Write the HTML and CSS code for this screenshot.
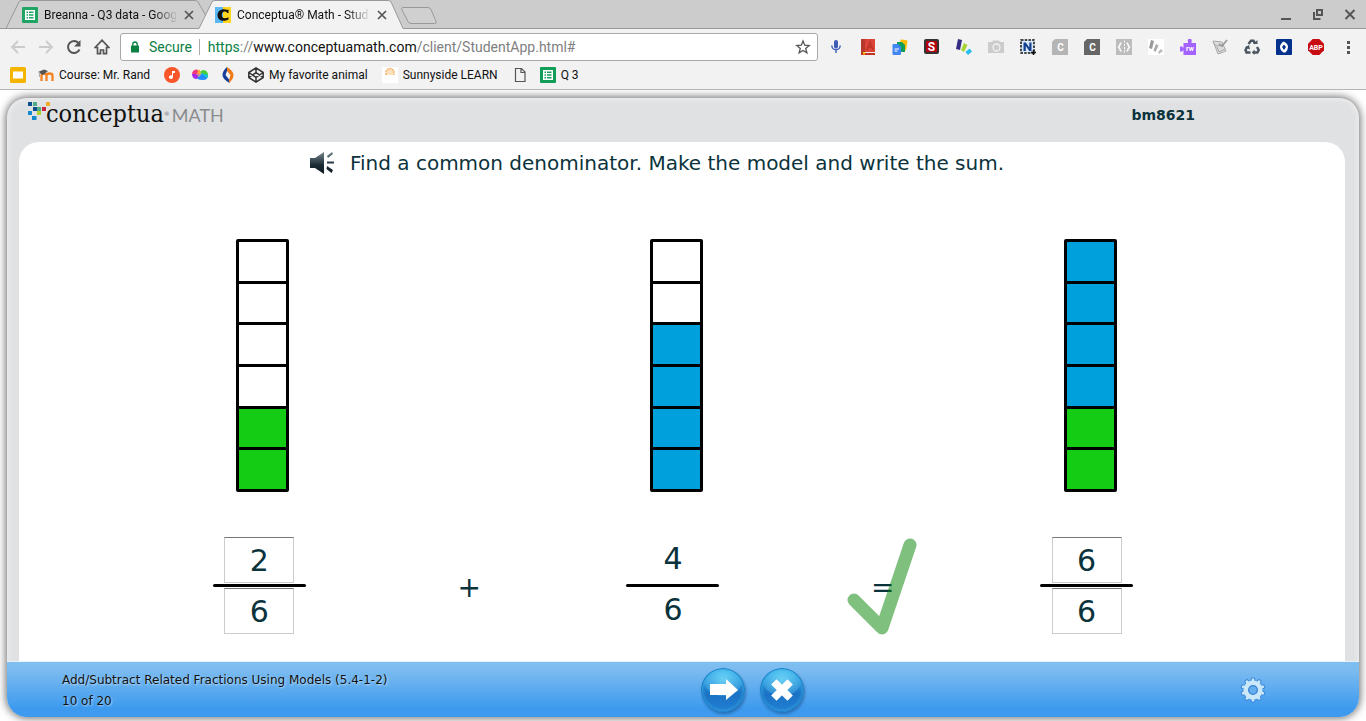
FILE: index.html
```html
<!DOCTYPE html>
<html lang="en">
<head>
<meta charset="utf-8">
<title>Conceptua® Math - Student</title>
<link rel="stylesheet" href="styles.css">
</head>
<body>
<header class="browser">
  <div class="tabstrip">
    <div class="tab">
      <svg class="tab-shape" viewBox="0 0 209 29" preserveAspectRatio="none"><path d="M0 28.5 L13 2 Q14 .5 16 .5 H190 Q192 .5 193 2 L208 28.5Z" fill="#d0d0d0" stroke="#999"/></svg>
      <svg class="icon" viewBox="0 0 16 16"><rect width="16" height="16" rx="1" fill="#1fa463"/><path d="M3 3h10v10H3zM4.500 4.500v1.500h1.500v-1.500zM7 4.500v1.500h4.500v-1.500zM4.500 7.200v1.500h1.500v-1.500zM7 7.200v1.500h4.500v-1.500zM4.500 10v1.500h1.500v-1.500zM7 10v1.500h4.500v-1.500z" fill="#fff" fill-rule="evenodd"/></svg>
      <span class="tab-title">Breanna - Q3 data - Goog</span>
      <button class="plain tab-close" aria-label="Close tab"><svg viewBox="0 0 10 10"><path d="M1 1l8 8M9 1l-8 8" stroke="#555" stroke-width="1.700"/></svg></button>
    </div>
    <div class="tab tab-active">
      <svg class="tab-shape" viewBox="0 0 209 29" preserveAspectRatio="none"><path d="M0 28.5 L13 2 Q14 .5 16 .5 H190 Q192 .5 193 2 L205 28.5 V29 H0Z" fill="#f2f2f2"/><path d="M0 28.5 L13 2 Q14 .5 16 .5 H190 Q192 .5 193 2 L205 28.5" fill="none" stroke="#999"/></svg>
      <svg class="icon" viewBox="0 0 16 16"><rect width="8" height="16" fill="#5bb8f5"/><rect x="8" width="8" height="16" fill="#ffd51f"/><path d="M13.500 6V2.300l-1 .7C8 .8 2.500 3 2.500 8s5 7.500 11 4.500v-2.300C9.500 12.500 6.800 11 6.800 8s3-5 5.500-2z" fill="#111"/></svg>
      <span class="tab-title">Conceptua® Math - Stud</span>
      <button class="plain tab-close" aria-label="Close tab"><svg viewBox="0 0 10 10"><path d="M1 1l8 8M9 1l-8 8" stroke="#555" stroke-width="1.700"/></svg></button>
    </div>
    <button class="plain new-tab" aria-label="New tab"><svg viewBox="0 0 36 18"><path d="M2 .5h25q2 0 3 2l5 12q1 2-1.500 2H10q-2 0-3-2L1 3Q0 .5 2 .5z" fill="#d0d0d0" stroke="#999"/></svg></button>
    <div class="window-controls">
      <button class="plain icon-button" aria-label="Minimize"><svg viewBox="0 0 16 16"><path d="M3 11h10v2H3z" fill="#555"/></svg></button>
      <button class="plain icon-button" aria-label="Restore"><svg viewBox="0 0 16 16"><path d="M7 3h5v5H7z" fill="none" stroke="#555" stroke-width="2"/><path d="M4 5v7h6.500" fill="none" stroke="#555" stroke-width="2"/></svg></button>
      <button class="plain icon-button" aria-label="Close"><svg viewBox="0 0 16 16"><path d="M3.500 3l9 9M12.500 3l-9 9" stroke="#555" stroke-width="2"/></svg></button>
    </div>
  </div>

  <div class="toolbar">
    <nav class="nav-buttons">
      <button class="plain icon-button" aria-label="Back"><svg viewBox="0 0 16 16"><path d="M15 8H2M8 2L2 8l6 6" fill="none" stroke="#cbcbcb" stroke-width="1.800"/></svg></button>
      <button class="plain icon-button" aria-label="Forward"><svg viewBox="0 0 16 16"><path d="M1 8h13M8 2l6 6-6 6" fill="none" stroke="#cbcbcb" stroke-width="1.800"/></svg></button>
      <button class="plain icon-button" aria-label="Reload"><svg viewBox="0 0 16 16"><path d="M13.500 10.500A6 6 0 1 1 12.500 4" fill="none" stroke="#555" stroke-width="2"/><path d="M14.500 1v6.500H8z" fill="#555"/></svg></button>
      <button class="plain icon-button" aria-label="Home"><svg viewBox="0 0 16 16"><path d="M3.500 14.700V8.500H1.200L8 1.200 14.800 8.500h-2.300v6.200h-3V11h-3v3.700z" fill="none" stroke="#555" stroke-width="1.700"/></svg></button>
    </nav>
    <div class="omnibox">
      <svg class="lock" viewBox="0 0 8 12"><path d="M1.800 5V3.200a2.200 2.200 0 0 1 4.400 0V5" fill="none" stroke="#0b8043" stroke-width="1.300"/><rect y="4.500" width="8" height="7" rx=".6" fill="#0b8043"/></svg>
      <span class="secure">Secure</span>
      <span class="url" role="textbox" aria-label="Address"><span class="scheme">https</span>://<span class="host">www.conceptuamath.com</span>/client/StudentApp.html#</span>
      <button class="plain icon-button" aria-label="Bookmark this page"><svg viewBox="0 0 16 16"><path d="M8 2l1.700 4.200 4.500.3-3.500 2.900 1.200 4.400L8 11.400l-3.900 2.400 1.200-4.400-3.500-2.900 4.500-.3z" fill="none" stroke="#555" stroke-width="1.300"/></svg></button>
    </div>
    <div class="extensions">
      <button class="plain icon-button" aria-label="Voice"><svg viewBox="0 0 16 16"><rect x="6" y="1" width="4" height="8.500" rx="2" fill="#3f5bb5"/><path d="M3.800 6.500a4.200 4.200 0 0 0 8.400 0M8 11v3" fill="none" stroke="#3f5bb5" stroke-width="1.400"/></svg></button>
      <button class="plain icon-button" aria-label="Dictionary"><svg viewBox="0 0 16 16"><path d="M1 0h14v13H1z" fill="#db4437"/><path d="M1 0h4v16H1z" fill="#b5392d"/><path d="M3 13h12v1.200H3z" fill="#eee"/><path d="M1 14h14v2H1z" fill="#c23321"/><path d="M3 13h2v3l-1-1-1 1z" fill="#fbbc05"/><path d="M7 11l3-8 3 8M8 8h4" fill="none" stroke="#bb3428" stroke-width="1.400"/></svg></button>
      <button class="plain icon-button" aria-label="Documents"><svg viewBox="0 0 16 16"><rect x="8" y="1" width="7" height="10" rx="1" fill="#fbbc05" transform="rotate(8 12 5)"/><path d="M5 3h5l3 3v7H5z" fill="#0f9d58"/><path d="M1.500 5H6l3 3v7q0 1-1 1H1.500q-1 0-1-1V6q0-1 1-1z" fill="#4285f4"/><path d="M2.500 10h4.500M2.500 12h3" stroke="#fff"/></svg></button>
      <button class="plain icon-button" aria-label="S extension"><svg viewBox="0 0 16 16"><rect width="15" height="15" rx="2" fill="#333"/><path d="M2 2h11v11H2z" fill="#b3000c"/><text x="7.500" y="12" class="glyph glyph-l">S</text></svg></button>
      <button class="plain icon-button" aria-label="Highlighter"><svg viewBox="0 0 16 16"><path d="M2 0l4 1-2 10-4-1z" fill="#352b82"/><path d="M8 4l3.500 2-3.500 7-3-2z" fill="#a6d433"/><path d="M13.500 9.500l2.500 3-4 3.500-2.500-3z" fill="#27bdf1"/></svg></button>
      <button class="plain icon-button" aria-label="Camera"><svg viewBox="0 0 16 16"><path d="M1 3h3l1-1.500h6L12 3h4v11H0V4q0-1 1-1z" fill="#ccc"/><circle cx="8.500" cy="8.500" r="3.500" fill="none" stroke="#f2f2f2" stroke-width="1.300"/></svg></button>
      <button class="plain icon-button" aria-label="Nimbus"><svg viewBox="0 0 16 16"><path d="M1 1h13v13H1z" fill="#d9e9f8" stroke="#111" stroke-width="1.500" stroke-dasharray="2.500 1.200"/><path d="M3.500 12V3.500h2.300l3.500 5V3.500h2.200V12H9.300L5.800 7v5z" fill="#123f91"/><path d="M13.500 11v5M11 13.500h5" stroke="#111" stroke-width="1.500"/></svg></button>
      <button class="plain icon-button" aria-label="C extension"><svg viewBox="0 0 16 16"><path d="M3 0h13v16H0V3z" fill="#b5b5b5"/><text x="8.500" y="11.500" class="glyph">C</text></svg></button>
      <button class="plain icon-button" aria-label="C tool"><svg viewBox="0 0 16 16"><path d="M3 0h13v16H0V3z" fill="#666"/><text x="8.500" y="11.500" class="glyph">C</text></svg></button>
      <button class="plain icon-button" aria-label="Code view"><svg viewBox="0 0 16 16"><path d="M0 0h16v16H0z" fill="#bdbdbd"/><path d="M5.500 4Q4 4 4 6L2.500 8 4 10q0 2 1.500 2M10.500 4Q12 4 12 6l1.500 2L12 10q0 2-1.500 2" fill="none" stroke="#fff" stroke-width="1.400"/><path d="M8.500 1.500v13" stroke="#fff" stroke-dasharray="2 1.300"/></svg></button>
      <button class="plain icon-button" aria-label="Marker"><svg viewBox="0 0 16 16"><path d="M0 0h16v16H0z" fill="#fff"/><path d="M3 1l3 1-2 8-3-1z" fill="#999"/><path d="M8 5l2.500 1.500-3 6.500-2-1.500z" fill="#aaa"/><path d="M13 10l2 2-4 3-1-2z" fill="#bbb"/></svg></button>
      <button class="plain icon-button" aria-label="Read and write"><svg viewBox="0 0 16 16"><path d="M3.500 4H8V2.500A2 2 0 1 1 11.500 2.500V4H16v12H3.500v-4.500H2.500v1H0v-5h2.500v1h1z" fill="#a463ff"/><text x="10" y="12" class="glyph glyph-s">rw</text></svg></button>
      <button class="plain icon-button" aria-label="Notes"><svg viewBox="0 0 16 16"><path d="M1 2l9 1 4 9-8 3z" fill="#ddd" stroke="#aaa"/><path d="M1 3l3 4 8-1M5 8l2 5 6-3" fill="none" stroke="#aaa"/><path d="M15 1l-5 6-3-2" fill="none" stroke="#999" stroke-width="1.700"/></svg></button>
      <button class="plain icon-button" aria-label="Recycle"><svg viewBox="0 0 16 16"><path d="M4.500 5L7 1.800h2.500l1.600 2.700M13 8l1.700 3-1.300 2.500H9M6.500 13.500H2.500L1.500 11l2-3.500" fill="none" stroke="#4b5661" stroke-width="2.500"/><path d="M9 5h4.500V1zM10.500 10.500v5.500L7.800 13.500zM1 8.500L5 6l1 4.500z" fill="#4b5661"/></svg></button>
      <button class="plain icon-button" aria-label="Clever"><svg viewBox="0 0 16 16"><rect width="16" height="16" rx="1" fill="#03318c"/><path d="M7.500 2.500Q4 5 4 8t3.500 5.500L9.500 13.500Q12 11 12 8T8.500 3zM8 5.500l2 2.500-2 3-2-3z" fill="#fff" fill-rule="evenodd"/></svg></button>
      <button class="plain icon-button" aria-label="Ad blocker"><svg viewBox="0 0 16 16"><path d="M4.700 0h6.600L16 4.700v6.600L11.300 16H4.700L0 11.300V4.700z" fill="#c70d11"/><text x="8" y="11" class="glyph glyph-s">ABP</text></svg></button>
      <button class="plain icon-button" aria-label="Menu"><svg viewBox="0 0 16 16"><path d="M7 2h3v3H7zM7 7h3v3H7zM7 12h3v3H7z" fill="#555"/></svg></button>
    </div>
  </div>

  <nav class="bookmarks">
    <a class="bookmark" href="#" aria-label="Slides"><svg class="icon" viewBox="0 0 16 16"><rect width="16" height="16" rx="1.500" fill="#f5b400"/><path d="M3 4.500h10v7H3z" fill="#fff"/></svg></a>
    <a class="bookmark" href="#"><svg class="icon" viewBox="0 0 16 16"><path d="M3.500 14V8.500Q3.500 6.500 6 6.500t2.500 2V14V8.500Q8.500 6.500 11.500 6.500T14.500 8.500V14" fill="none" stroke="#f58220" stroke-width="2.300"/><path d="M0 5l6-2.500L10 4 5 8z" fill="#555"/><path d="M1.500 5v5" stroke="#aaa"/></svg><span class="bookmark-name">Course: Mr. Rand</span></a>
    <a class="bookmark" href="#" aria-label="Music"><svg class="icon" viewBox="0 0 16 16"><circle cx="8" cy="8" r="8" fill="#f9562a"/><path d="M8 4h3v2H9v4.300A2 1.800 0 1 1 8 8.500z" fill="#fff"/></svg></a>
    <a class="bookmark" href="#" aria-label="Colors"><svg class="icon" viewBox="0 0 16 16"><path d="M0 7a5 5 0 0 1 5-4.500L8 8z" fill="#f5367d"/><path d="M0 7h8l-3 5Q0 12 0 7z" fill="#a42ae8"/><path d="M5 2.500Q8 2.500 9 5l-1 3z" fill="#ff8a14"/><path d="M8 7q0-4 4-4 4 1 4 5H8z" fill="#49cf38"/><path d="M5 11.500L9 6l7 2q0 5-5 5-4 0-6-1.500z" fill="#248cff"/><path d="M9 6l7 2q0 2-1 3z" fill="#17c9c4"/><path d="M7 3.500l3 3-3 3.500-3-3z" fill="#ffd83d" fill-opacity=".5"/></svg></a>
    <a class="bookmark" href="#" aria-label="Flame"><svg class="icon" viewBox="0 0 16 16"><path d="M7 0v4L5.500 8l4 5v3Q2.500 12 2.500 8 2.500 4 7 0z" fill="#173f99"/><path d="M7 0q6.500 4 6.500 8 0 4-4.500 8v-3l1.500-5L7 4z" fill="#ef7b1a"/></svg></a>
    <a class="bookmark" href="#"><svg class="icon" viewBox="0 0 16 16"><path d="M8 .800l7.200 4.700v5L8 15.200.800 10.500v-5zM.800 5.500L8 10.300l7.200-4.800M.800 10.500L8 5.700l7.200 4.800M8 .800v4.900M8 10.300v4.900" fill="none" stroke="#333" stroke-width="1.500" stroke-linejoin="round"/></svg><span class="bookmark-name">My favorite animal</span></a>
    <a class="bookmark" href="#"><svg class="icon" viewBox="0 0 16 16"><path d="M0 0h16v16H0z" fill="#fff"/><path d="M4 8V5.500a4 4 0 0 1 8 0V8" fill="#fde0be" stroke="#f7b26f" stroke-width="1.500" stroke-dasharray="2 .7"/></svg><span class="bookmark-name">Sunnyside LEARN</span></a>
    <a class="bookmark" href="#" aria-label="Untitled page"><svg class="icon" viewBox="0 0 16 16"><path d="M3.500 1.500h6l3.500 3.500v9.500H3.500zM9 1.500V5.500h4" fill="none" stroke="#555" stroke-width="1.200"/></svg></a>
    <a class="bookmark" href="#"><svg class="icon" viewBox="0 0 16 16"><rect width="16" height="16" rx="1" fill="#0f9d58"/><path d="M3 3h10v10H3zM4.500 4.500v1.500h1.500v-1.500zM7 4.500v1.500h4.500v-1.500zM4.500 7.200v1.500h1.500v-1.500zM7 7.200v1.500h4.500v-1.500zM4.500 10v1.500h1.500v-1.500zM7 10v1.500h4.500v-1.500z" fill="#fff" fill-rule="evenodd"/></svg><span class="bookmark-name">Q 3</span></a>
  </nav>
</header>

<div class="app">
  <div class="shell">
    <header class="app-header">
      <div class="logo">
        <svg class="logo-dots" viewBox="0 0 22 18"><path d="M0 0h4v4H0zM5 5h4v4H5z" fill="#0c4d8e"/><path d="M5 0h4v4H5zM9 5h4v4H9z" fill="#4cad86"/><path d="M18 0h4v4h-4z" fill="#f0ab26"/><path d="M14 5h4v4h-4z" fill="#cc2438"/><path d="M0 9h4v4H0zM4 14h4.500v4H4z" fill="#1389cf"/><path d="M9 9h4v4H9z" fill="#aed036"/></svg>
        <span class="logo-name">conceptua</span><span class="logo-mark">®</span><span class="logo-math">MATH</span>
      </div>
      <span class="user">bm8621</span>
    </header>

    <main class="panel">
      <div class="prompt">
        <button class="plain speaker" aria-label="Read aloud"><svg viewBox="0 0 24 22"><defs><linearGradient id="ink" x2="0" y2="1"><stop offset="0" stop-color="#75848c"/><stop offset=".6" stop-color="#1b2b35"/><stop offset="1" stop-color="#0c1920"/></linearGradient></defs><path d="M0 6h5l9-6v22L5 16H0zM17 4l5-4 1 2-5 4zM17 9.500h7v2h-7zM17 14l6 4-1.500 3-5-4z" fill="url(#ink)"/></svg></button>
        <span>Find a common denominator. Make the model and write the sum.</span>
      </div>

      <div class="models">
        <div class="bar"><i></i><i></i><i></i><i></i><i class="green"></i><i class="green"></i></div>
        <div class="bar bar-second"><i></i><i></i><i class="blue"></i><i class="blue"></i><i class="blue"></i><i class="blue"></i></div>
        <div class="bar bar-sum"><i class="blue"></i><i class="blue"></i><i class="blue"></i><i class="blue"></i><i class="green"></i><i class="green"></i></div>
      </div>

      <div class="equation">
        <div class="fraction">
          <input class="digit digit-box" value="2" aria-label="First numerator">
          <span class="rule"></span>
          <input class="digit digit-box" value="6" aria-label="First denominator">
        </div>
        <span class="operator">+</span>
        <div class="fraction">
          <span class="digit">4</span>
          <span class="rule"></span>
          <span class="digit">6</span>
        </div>
        <span class="operator">=<svg class="check" viewBox="0 0 70 97"><path d="M7 62l28 28L63 7" fill="none" stroke="#008200" stroke-opacity=".5" stroke-width="13" stroke-linecap="round" stroke-linejoin="round"/></svg></span>
        <div class="fraction">
          <input class="digit digit-box" value="6" aria-label="Sum numerator">
          <span class="rule"></span>
          <input class="digit digit-box" value="6" aria-label="Sum denominator">
        </div>
      </div>
    </main>

    <footer class="app-footer">
      <div class="lesson">
        <div>Add/Subtract Related Fractions Using Models (5.4-1-2)</div>
        <div>10 of 20</div>
      </div>
      <div class="actions">
        <button class="round" aria-label="Next"><svg viewBox="0 0 44 44"><path d="M9 16h16v-5l12 11-12 10v-5H9z" fill="#fff"/></svg></button>
        <button class="round" aria-label="Close"><svg viewBox="0 0 44 44"><path d="M16.500 16.500l11 11M27.500 16.500l-11 11" stroke="#fff" stroke-width="7.500" stroke-linecap="square"/></svg></button>
      </div>
      <button class="plain gear" aria-label="Settings"><svg viewBox="0 0 26 26"><g fill="#c9e9fb" stroke="#3f86d9"><path d="M11.500 1h3l1 5h-5zM11.500 25h3l1-5h-5z"/><path d="M11.500 1h3l1 5h-5zM11.500 25h3l1-5h-5z" transform="rotate(36 13 13)"/><path d="M11.500 1h3l1 5h-5zM11.500 25h3l1-5h-5z" transform="rotate(72 13 13)"/><path d="M11.500 1h3l1 5h-5zM11.500 25h3l1-5h-5z" transform="rotate(108 13 13)"/><path d="M11.500 1h3l1 5h-5zM11.500 25h3l1-5h-5z" transform="rotate(144 13 13)"/></g><circle cx="13" cy="13" r="6.800" fill="none" stroke="#c9e9fb" stroke-width="5.400"/><circle cx="13" cy="13" r="4.300" fill="#62aeee" stroke="#3a7fd2" stroke-width="1.300"/></svg></button>
    </footer>
  </div>
</div>
</body>
</html>
```

FILE: styles.css
```css
* {
  box-sizing: border-box;
}

body {
  margin: 0;
  min-height: 100vh;
  display: flex;
  flex-direction: column;
  background: #fff;
  font-family: "DejaVu Sans", Verdana, sans-serif;
}

svg {
  display: block;
}

.plain {
  padding: 0;
  border: 0;
  background: none;
  cursor: pointer;
}

.icon,
.icon-button,
.icon-button svg {
  width: 16px;
  height: 16px;
  flex: none;
}

/* Browser frame */
.browser {
  background: #f2f2f2;
  border-bottom: 1px solid #b6b6b6;
  font-family: Roboto, sans-serif;
  font-size: 12px;
  color: #111;
}

.tabstrip {
  display: flex;
  height: 29px;
  padding: 0 8px 0 6px;
  background: #ccc;
  box-shadow: inset 0 -1px #999;
}

.tab {
  position: relative;
  display: flex;
  align-items: center;
  width: 208px;
  padding: 0 20px 0 16px;
}

.tab-active {
  margin-left: -15px;
}

.tab-shape {
  position: absolute;
  inset: 0;
  width: 100%;
  height: 100%;
}

.tab .icon,
.tab-title,
.tab-close {
  position: relative;
}

.tab-title {
  flex: 1;
  margin: 0 6px;
  white-space: nowrap;
  -webkit-mask-image: linear-gradient(to right, #000 82%, transparent);
  mask-image: linear-gradient(to right, #000 82%, transparent);
}

.tab-close {
  width: 10px;
  height: 10px;
}

.new-tab {
  width: 36px;
  height: 18px;
  margin: 7px 0 0 -6px;
}

.window-controls {
  display: flex;
  align-items: center;
  gap: 16px;
  margin-left: auto;
}

.toolbar {
  display: flex;
  align-items: center;
  gap: 10px;
  height: 36px;
  padding: 0 10px;
}

.nav-buttons {
  display: flex;
  gap: 12px;
}

.extensions {
  display: flex;
  gap: 16px;
}

.omnibox {
  display: flex;
  flex: 1;
  align-items: center;
  height: 28px;
  padding: 0 6px 0 10px;
  border: 1px solid #a9a9a9;
  border-radius: 3px;
  background: #fff;
  font-size: 14px;
}

.lock {
  width: 8px;
  height: 12px;
  margin-right: 10px;
}

.secure,
.scheme {
  color: #0b8043;
}

.secure {
  padding-right: 7px;
  border-right: 1px solid #aaa;
}

.url {
  flex: 1;
  margin-left: 8px;
  color: #808080;
  white-space: nowrap;
}

.host {
  color: #111;
}

.bookmarks {
  display: flex;
  align-items: center;
  gap: 12px;
  height: 24px;
  padding: 0 10px 4px;
}

.bookmark {
  display: flex;
  align-items: center;
  gap: 5px;
  color: #111;
  text-decoration: none;
  white-space: nowrap;
}

.bookmark-name {
  padding-right: 2px;
}

.glyph {
  fill: #fff;
  font: bold 10px Roboto, sans-serif;
  text-anchor: middle;
}

.glyph-l {
  font-size: 12px;
}

.glyph-s {
  font-size: 7px;
}

/* Lesson application */
.app {
  display: flex;
  flex: 1;
  padding: 8px 7px 4px;
  overflow: hidden;
}

.shell {
  display: flex;
  flex: 1;
  flex-direction: column;
  border-radius: 20px;
  background: #e0e1e3;
  box-shadow: 0 0 8px 1px rgba(0, 0, 0, 0.6), inset 0 0 6px #f4f4f4;
}

.app-header {
  display: flex;
  justify-content: space-between;
  height: 44px;
  padding: 0 164px 0 21px;
}

.logo {
  display: flex;
  align-items: flex-start;
  line-height: 32px;
}

.logo-dots {
  width: 22px;
  height: 18px;
  margin: 4px -4px 0 0;
}

.logo-name {
  color: #111;
  font-family: "DejaVu Serif Condensed", "DejaVu Serif", serif;
  font-size: 25px;
}

.logo-mark {
  color: #777;
  font-size: 6px;
}

.logo-math {
  margin-left: 2px;
  color: #8b8c8e;
  font-family: Lato, sans-serif;
  font-size: 18px;
  line-height: 34px;
}

.user {
  color: #0b333c;
  font-size: 14px;
  font-weight: bold;
  line-height: 34px;
}

.panel {
  flex: 1;
  margin: 0 14px 0 12px;
  padding: 8px 0 28px;
  border-radius: 20px 20px 0 0;
  background: #fff;
  color: #0b333c;
}

.prompt {
  display: flex;
  align-items: center;
  justify-content: center;
  gap: 16px;
  padding-right: 50px;
  font-size: 20px;
  line-height: 26px;
}

.speaker,
.speaker svg {
  width: 24px;
  height: 22px;
}

.models,
.equation {
  display: grid;
  grid-template-columns: repeat(5, 1fr);
  justify-items: center;
}

.models {
  margin-top: 63px;
  padding: 0 151px 0 140px;
}

.bar {
  display: flex;
  flex-direction: column;
  gap: 3px;
  width: 53px;
  height: 253px;
  border: 3px solid #000;
  border-radius: 2px;
  background: #000;
}

.bar-second {
  grid-column: 3;
}

.bar-sum {
  grid-column: 5;
}

.bar i {
  flex: 1;
  background: #fff;
}

.bar .green {
  background: #14cc14;
}

.bar .blue {
  background: #00a0dc;
}

.equation {
  align-items: center;
  margin-top: 45px;
  padding: 0 155px 0 137px;
}

.fraction {
  display: flex;
  flex-direction: column;
  align-items: center;
  gap: 1px;
}

.rule {
  width: 93px;
  height: 3px;
  border-radius: 2px;
  background: #000;
}

.digit {
  width: 70px;
  height: 46px;
  color: inherit;
  font: 30px/44px "DejaVu Sans", Verdana, sans-serif;
  text-align: center;
}

.digit-box {
  padding: 0;
  border: 1px solid #ccc;
  border-top-color: #777;
  background: #fff;
}

.operator {
  position: relative;
  padding: 4px 0 0 6px;
  font-size: 28px;
  line-height: 36px;
}

.check {
  position: absolute;
  top: -28px;
  left: -18px;
  width: 70px;
  height: 97px;
}

.app-footer {
  display: grid;
  grid-template-columns: 58fr auto 42fr;
  align-items: center;
  min-height: 55px;
  padding: 0 93px 0 55px;
  border-radius: 0 0 20px 20px;
  background: linear-gradient(#7fbff0, #7bbbf0 15%, #3d9aee 85%);
  box-shadow: 0 -1px #e8f2f8;
}

.lesson {
  padding-top: 2px;
  color: #111;
  font-size: 12px;
  line-height: 21px;
  text-shadow: 1px 1px 2px rgba(255, 255, 255, 0.6);
}

.actions {
  display: flex;
  gap: 15px;
}

.round {
  width: 44px;
  height: 44px;
  padding: 0;
  border: 0;
  border-radius: 50%;
  background:
    radial-gradient(ellipse 20px 17px at 50% 26%, rgba(130, 230, 255, 0.7), rgba(90, 190, 240, 0.35) 95%, transparent),
    linear-gradient(#35b5ec, #1b72c4 60%, #2180d4);
  box-shadow: inset 0 0 0 1px #1b7fc6, inset 0 0 3px 2px rgba(60, 170, 230, 0.7), 1px 2px 3px rgba(0, 40, 90, 0.4);
  cursor: pointer;
}

.gear {
  justify-self: end;
}

.gear,
.gear svg {
  width: 26px;
  height: 26px;
}
```
